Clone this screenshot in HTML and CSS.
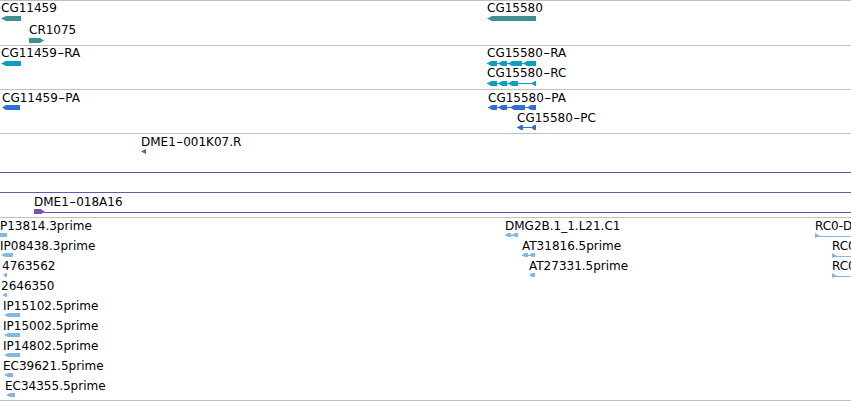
FILE: index.html
```html
<!DOCTYPE html>
<html>
<head>
<meta charset="utf-8">
<title>Tracks</title>
<link rel="stylesheet" href="styles.css">
</head>
<body>
<div class="browser">

  <section class="track track-genes">
    <div class="feat" style="left:1px;top:0px">
      <span class="label">CG11459</span>
      <svg class="glyph c-teal" width="20" height="5"><polygon points="0,2.5 5,0 20,0 20,5 5,5"/></svg>
    </div>
    <div class="feat" style="left:29px;top:22px">
      <span class="label">CR1075</span>
      <svg class="glyph c-teal" width="15" height="5"><polygon points="0,0 11,0 15,2.5 11,5 0,5"/></svg>
    </div>
    <div class="feat" style="left:487px;top:0px">
      <span class="label">CG15580</span>
      <svg class="glyph c-teal" width="49" height="5"><polygon points="0,2.5 5,0 49,0 49,5 5,5"/></svg>
    </div>
  </section>

  <section class="track track-tx">
    <div class="feat" style="left:1px;top:0px">
      <span class="label">CG11459<span class="dash">-</span>RA</span>
      <svg class="glyph c-cyan" width="20" height="5"><polygon points="0,2.5 5,0 20,0 20,5 5,5"/></svg>
    </div>
    <div class="feat" style="left:487px;top:0px">
      <span class="label">CG15580<span class="dash">-</span>RA</span>
      <svg class="glyph c-cyan" width="49" height="5">
        <rect x="0" y="2" width="49" height="1"/>
        <polygon points="0,2.5 4,0 10,0 10,5 4,5"/>
        <polygon points="11,2.5 15,0 20,0 20,5 15,5"/>
        <polygon points="21,2.5 25,0 35,0 35,5 25,5"/>
        <polygon points="36,2.5 40,0 49,0 49,5 40,5"/>
      </svg>
    </div>
    <div class="feat" style="left:487px;top:20px">
      <span class="label">CG15580<span class="dash">-</span>RC</span>
      <svg class="glyph c-cyan" width="49" height="5">
        <rect x="0" y="2" width="49" height="1"/>
        <polygon points="0,2.5 4,0 10,0 10,5 4,5"/>
        <polygon points="11,2.5 15,0 20,0 20,5 15,5"/>
        <polygon points="21,2.5 25,0 31,0 31,5 25,5"/>
        <polygon points="44,2.5 48,0 49,0 49,5 48,5"/>
      </svg>
    </div>
  </section>

  <section class="track track-prot tight">
    <div class="feat" style="left:2px;top:1px">
      <span class="label">CG11459<span class="dash">-</span>PA</span>
      <svg class="glyph c-blue" width="18" height="5"><polygon points="0,2.5 4,0 18,0 18,5 4,5"/></svg>
    </div>
    <div class="feat" style="left:488px;top:1px">
      <span class="label">CG15580<span class="dash">-</span>PA</span>
      <svg class="glyph c-blue" width="48" height="5">
        <rect x="0" y="2" width="48" height="1"/>
        <polygon points="0,2.5 4,0 9,0 9,5 4,5"/>
        <polygon points="10,2.5 14,0 19,0 19,5 14,5"/>
        <polygon points="22,2.5 26,0 37,0 37,5 26,5"/>
        <polygon points="39,2.5 43,0 48,0 48,5 43,5"/>
      </svg>
    </div>
    <div class="feat" style="left:517px;top:21px">
      <span class="label">CG15580<span class="dash">-</span>PC</span>
      <svg class="glyph c-blue" width="19" height="5">
        <rect x="0" y="2" width="19" height="1"/>
        <polygon points="0,2.5 4,0 6,0 6,5 4,5"/>
        <polygon points="14,2.5 17,0 19,0 19,5 17,5"/>
      </svg>
    </div>
  </section>

  <section class="track track-bac tight">
    <div class="feat" style="left:141px;top:1px">
      <span class="label">DME1<span class="dash">-</span>001K07.R</span>
      <svg class="glyph c-purple" width="5" height="5"><polygon points="0,2.5 5,0 5,5"/></svg>
    </div>
    <div class="span-line c-purple-bg" style="top:38px"></div>
    <div class="span-line c-purple-bg" style="top:58px"></div>
    <div class="feat" style="left:34px;top:61px">
      <span class="label">DME1<span class="dash">-</span>018A16</span>
      <svg class="glyph c-purple" width="817" height="5">
        <rect x="10" y="3" width="807" height="1"/>
        <polygon points="0,0 7,0 11,3 7,5 0,5"/>
      </svg>
    </div>
  </section>

  <section class="track track-est tight">
    <div class="feat" style="left:0px;top:1px">
      <span class="label">P13814.3prime</span>
      <svg class="glyph c-light" width="7" height="4"><polygon points="0,0 7,0 7,4 0,4"/></svg>
    </div>
    <div class="feat" style="left:0px;top:21px">
      <span class="label">IP08438.3prime</span>
      <svg class="glyph c-light shift1" width="12" height="4"><polygon points="0,2 4,0 12,0 12,4 4,4"/></svg>
    </div>
    <div class="feat" style="left:2px;top:41px">
      <span class="label">4763562</span>
      <svg class="glyph c-light shift1" width="4" height="4"><polygon points="0,2 3,0 4,0 4,4 3,4"/></svg>
    </div>
    <div class="feat" style="left:1px;top:61px">
      <span class="label">2646350</span>
      <svg class="glyph c-light shift1" width="5" height="4"><polygon points="0,2 4,0 5,0 5,4 4,4"/></svg>
    </div>
    <div class="feat" style="left:3px;top:81px">
      <span class="label">IP15102.5prime</span>
      <svg class="glyph c-light shift1" width="16" height="4"><polygon points="0,2 4,0 16,0 16,4 4,4"/></svg>
    </div>
    <div class="feat" style="left:3px;top:101px">
      <span class="label">IP15002.5prime</span>
      <svg class="glyph c-light shift1" width="16" height="4"><polygon points="0,2 4,0 16,0 16,4 4,4"/></svg>
    </div>
    <div class="feat" style="left:3px;top:121px">
      <span class="label">IP14802.5prime</span>
      <svg class="glyph c-light shift1" width="16" height="4"><polygon points="0,2 4,0 16,0 16,4 4,4"/></svg>
    </div>
    <div class="feat" style="left:3px;top:141px">
      <span class="label">EC39621.5prime</span>
      <svg class="glyph c-light shift1" width="9" height="4"><polygon points="0,2 4,0 9,0 9,4 4,4"/></svg>
    </div>
    <div class="feat" style="left:5px;top:161px">
      <span class="label">EC34355.5prime</span>
      <svg class="glyph c-light shift1" width="9" height="4"><polygon points="0,2 4,0 9,0 9,4 4,4"/></svg>
    </div>

    <div class="feat" style="left:505px;top:1px">
      <span class="label">DMG2B.1_1.L21.C1</span>
      <svg class="glyph c-light" width="13" height="4">
        <rect x="0" y="2" width="13" height="1"/>
        <polygon points="0,2 3,0 6,0 6,4 3,4"/>
        <polygon points="7,2 10,0 13,0 13,4 10,4"/>
      </svg>
    </div>
    <div class="feat" style="left:522px;top:21px">
      <span class="label">AT31816.5prime</span>
      <svg class="glyph c-light" width="13" height="4">
        <rect x="0" y="2" width="13" height="1"/>
        <polygon points="0,2 3,0 6,0 6,4 3,4"/>
        <polygon points="7,2 10,0 13,0 13,4 10,4"/>
      </svg>
    </div>
    <div class="feat" style="left:529px;top:41px">
      <span class="label">AT27331.5prime</span>
      <svg class="glyph c-light" width="6" height="4"><polygon points="0,2 3,0 6,0 6,4 3,4"/></svg>
    </div>

    <div class="feat" style="left:815px;top:1px">
      <span class="label">RC0-D</span>
      <svg class="glyph c-light" width="36" height="5">
        <rect x="0" y="3" width="36" height="1"/>
        <polygon points="0,0 5,3 0,5"/>
      </svg>
    </div>
    <div class="feat" style="left:832px;top:21px">
      <span class="label">RC0</span>
      <svg class="glyph c-light" width="19" height="5">
        <rect x="0" y="3" width="19" height="1"/>
        <polygon points="0,0 5,3 0,5"/>
      </svg>
    </div>
    <div class="feat" style="left:832px;top:41px">
      <span class="label">RC0</span>
      <svg class="glyph c-light" width="19" height="5">
        <rect x="0" y="3" width="19" height="1"/>
        <polygon points="0,0 5,3 0,5"/>
      </svg>
    </div>
  </section>

</div>
</body>
</html>
```

FILE: styles.css
```css
html, body {
  margin: 0;
  padding: 0;
  background: #ffffff;
}

body {
  width: 851px;
  height: 401px;
  overflow: hidden;
  font-family: "DejaVu Sans", "Noto Sans", sans-serif;
}

.browser {
  width: 851px;
  border-top: 1px solid #c0c0c0;
  overflow: hidden;
}

.track {
  position: relative;
  border-bottom: 1px solid #c0c0c0;
  overflow: hidden;
}

.track-genes { height: 44px; }
.track-tx    { height: 43px; }
.track-prot  { height: 43px; }
.track-bac   { height: 83px; }
.track-est   { height: 182px; }

.feat {
  position: absolute;
  white-space: nowrap;
}

.label {
  display: block;
  font-size: 12px;
  line-height: 14px;
  color: #000000;
}

.dash {
  display: inline-block;
  padding: 0 1.5px;
  transform: scaleX(1.6);
}

.glyph {
  display: block;
  margin-top: 1px;
  overflow: visible;
}

.tight .glyph {
  margin-top: 0;
}

.shift1 {
  margin-left: 1px;
}

.span-line {
  position: absolute;
  left: 0;
  right: 0;
  height: 1px;
}

.c-teal   { fill: #40908f; }
.c-cyan   { fill: #0ca0bf; }
.c-blue   { fill: #3070d0; }
.c-purple { fill: #7352b2; }
.c-light  { fill: #80b8e0; }
.c-purple-bg { background: #7352b2; }
```
